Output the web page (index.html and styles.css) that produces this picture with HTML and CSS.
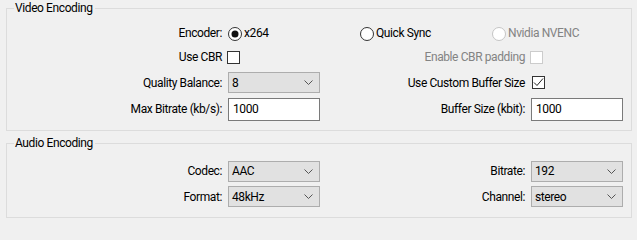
FILE: index.html
```html
<!DOCTYPE html>
<html>
<head>
<meta charset="utf-8">
<link rel="stylesheet" href="styles.css">
</head>
<body>
<div class="page">
  <div class="group group-video">
    <span class="title">Video Encoding</span>
    <div class="grid grid-video">
      <div class="label">Encoder:</div>
      <div class="radios">
        <div class="radio">
          <svg class="rd" width="14" height="14" viewBox="0 0 14 14"><circle cx="7" cy="7" r="6.5" fill="#fff" stroke="#333"/><circle cx="7" cy="7" r="3.5" fill="#111"/></svg>
          <span>x264</span>
        </div>
        <div class="radio">
          <svg class="rd" width="14" height="14" viewBox="0 0 14 14"><circle cx="7" cy="7" r="6.5" fill="#fff" stroke="#333"/></svg>
          <span>Quick Sync</span>
        </div>
        <div class="radio disabled">
          <svg class="rd" width="14" height="14" viewBox="0 0 14 14"><circle cx="7" cy="7" r="6.5" fill="#fff" stroke="#c4c4c4"/></svg>
          <span>Nvidia NVENC</span>
        </div>
      </div>

      <div class="label">Use CBR</div>
      <div class="cell"><span class="check"></span></div>
      <div class="label disabled">Enable CBR padding</div>
      <div class="cell"><span class="check check-disabled"></span></div>

      <div class="label">Quality Balance:</div>
      <div class="cell"><div class="combo"><span>8</span><svg width="9" height="5" viewBox="0 0 9 5"><polyline points="0.5,0.5 4.5,4.5 8.5,0.5" fill="none" stroke="#555"/></svg></div></div>
      <div class="label">Use Custom Buffer Size</div>
      <div class="cell"><span class="check check-on"><svg width="11" height="11" viewBox="0 0 11 11"><polyline points="1,5.5 4,8.5 10,1.5" fill="none" stroke="#222" stroke-width="1"/></svg></span></div>

      <div class="label">Max Bitrate (kb/s):</div>
      <div class="cell"><div class="edit">1000</div></div>
      <div class="label">Buffer Size (kbit):</div>
      <div class="cell"><div class="edit">1000</div></div>
    </div>
  </div>

  <div class="group group-audio">
    <span class="title">Audio Encoding</span>
    <div class="grid grid-audio">
      <div class="label">Codec:</div>
      <div class="cell"><div class="combo"><span>AAC</span><svg width="9" height="5" viewBox="0 0 9 5"><polyline points="0.5,0.5 4.5,4.5 8.5,0.5" fill="none" stroke="#555"/></svg></div></div>
      <div class="label">Bitrate:</div>
      <div class="cell"><div class="combo"><span>192</span><svg width="9" height="5" viewBox="0 0 9 5"><polyline points="0.5,0.5 4.5,4.5 8.5,0.5" fill="none" stroke="#555"/></svg></div></div>

      <div class="label">Format:</div>
      <div class="cell"><div class="combo"><span>48kHz</span><svg width="9" height="5" viewBox="0 0 9 5"><polyline points="0.5,0.5 4.5,4.5 8.5,0.5" fill="none" stroke="#555"/></svg></div></div>
      <div class="label">Channel:</div>
      <div class="cell"><div class="combo"><span>stereo</span><svg width="9" height="5" viewBox="0 0 9 5"><polyline points="0.5,0.5 4.5,4.5 8.5,0.5" fill="none" stroke="#555"/></svg></div></div>
    </div>
  </div>
</div>
</body>
</html>
```

FILE: styles.css
```css
html, body {
  margin: 0;
  padding: 0;
  background: #f0f0f0;
}
body {
  width: 637px;
  height: 233px;
  overflow: hidden;
  font-family: Roboto, "Noto Sans", sans-serif;
  font-size: 12px;
  letter-spacing: -0.4px;
  color: #000;
}
.page {
  padding: 8px 5px 0 6px;
}
.group {
  position: relative;
  border: 1px solid #dcdcdc;
}
.group-audio {
  margin-top: 12px;
}
.title {
  position: absolute;
  left: 7px;
  top: -9px;
  line-height: 16px;
  padding: 0 2px 0 1px;
  background: #f0f0f0;
}
.grid {
  display: grid;
  grid-template-columns: 215px 92px 199px 93px;
  column-gap: 6px;
  padding-right: 7px;
  align-items: center;
}
.grid-video {
  grid-template-rows: 24px 24px 27px 26px;
  padding-top: 12px;
  padding-bottom: 8px;
}
.grid-audio {
  grid-template-rows: 26px 25px;
  padding-top: 14px;
  padding-bottom: 8px;
}
.label {
  text-align: right;
  white-space: nowrap;
  line-height: 16px;
}
.disabled {
  color: #838383;
}
.cell {
  display: flex;
  align-items: center;
}
.radios {
  grid-column: 2 / 5;
  display: flex;
  align-items: center;
}
.radio {
  width: 132px;
  display: flex;
  align-items: center;
  gap: 2px;
  line-height: 16px;
}
.rd {
  flex: none;
  margin-top: 1px;
}
.check {
  display: inline-flex;
  align-items: center;
  justify-content: center;
  width: 11px;
  height: 11px;
  border: 1px solid #333;
  background: #fff;
  margin-left: -1px;
}
.check-disabled {
  border-color: #cccccc;
  margin-left: -1px;
}
.check-on {
  margin-left: 1px;
}
.combo {
  box-sizing: border-box;
  width: 92px;
  height: 21px;
  border: 1px solid #adadad;
  background: #e1e1e1;
  display: flex;
  align-items: center;
  justify-content: space-between;
  padding: 0 6px 0 3px;
  line-height: 16px;
}
.combo svg {
  flex: none;
}
.edit {
  box-sizing: border-box;
  width: 92px;
  height: 23px;
  border: 1px solid #7a7a7a;
  background: #fff;
  padding: 0 4px;
  line-height: 21px;
}
```
